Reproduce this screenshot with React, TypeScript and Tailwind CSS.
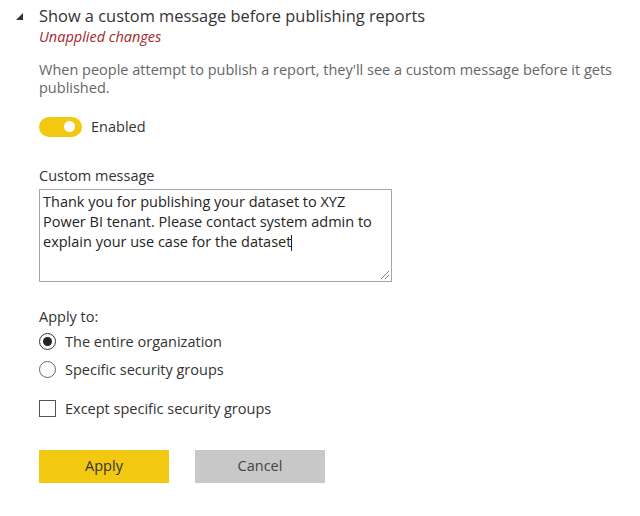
import React from "react";

export default function App() {
  return (
    <div
      className="w-[640px] h-[516px] bg-white overflow-hidden relative"
      style={{ fontFamily: '"Open Sans", "Noto Sans", sans-serif' }}
    >
      <div className="flex items-start pt-[5px]">
        <div className="w-[39px] flex justify-end pr-[16px] pt-[8px]">
          <svg width="7" height="7" viewBox="0 0 7 7">
            <polygon points="7,0 7,7 0,7" fill="#333" />
          </svg>
        </div>
        <div className="flex flex-col">
          <div className="text-[16.4px] leading-[22px] text-[#333333]">
            Show a custom message before publishing reports
          </div>
          <div className="text-[14.5px] leading-[20px] italic text-[#a4262c]">
            Unapplied changes
          </div>
        </div>
      </div>
      <div className="pl-[39px] pr-[20px]">
        <p className="mt-[14px] text-[14.5px] leading-[18px] text-[#666666]">
          When people attempt to publish a report, they'll see a custom message before it gets
          published.
        </p>
        <div className="mt-[19px] flex items-center gap-[9px]">
          <div className="w-[43px] h-[20px] rounded-full bg-[#f2c811] flex items-center justify-end pr-[7px]">
            <div className="w-[11px] h-[11px] rounded-full bg-white" />
          </div>
          <span className="text-[14.5px] text-[#333333]">Enabled</span>
        </div>
        <div className="mt-[28px] text-[14.5px] leading-[20px] text-[#333333]">Custom message</div>
        <div className="mt-[3px] w-[353px] h-[93px] border border-[#a6a6a6] relative pl-[3px] pr-[12px] pt-[2px]">
          <div className="text-[14.5px] leading-[20px] text-[#252423]">
            Thank you for publishing your dataset to XYZ Power BI tenant. Please contact system
            admin to explain your use case for the dataset<span className="inline-block w-[1px] h-[16px] bg-[#252423] align-middle" />
          </div>
          <svg className="absolute right-[2px] bottom-[2px]" width="9" height="9" viewBox="0 0 9 9">
            <line x1="1" y1="9" x2="9" y2="1" stroke="#888" strokeWidth="1" />
            <line x1="5" y1="9" x2="9" y2="5" stroke="#888" strokeWidth="1" />
          </svg>
        </div>
        <div className="mt-[25px] text-[14.5px] leading-[20px] text-[#333333]">Apply to:</div>
        <div className="mt-[4px] flex items-center gap-[9px] h-[22px]">
          <div className="w-[17px] h-[17px] rounded-full border border-[#333333] flex items-center justify-center">
            <div className="w-[9px] h-[9px] rounded-full bg-[#252423]" />
          </div>
          <span className="text-[14.5px] text-[#333333]">The entire organization</span>
        </div>
        <div className="mt-[6px] flex items-center gap-[9px] h-[22px]">
          <div className="w-[17px] h-[17px] rounded-full border border-[#666666]" />
          <span className="text-[14.5px] text-[#333333]">Specific security groups</span>
        </div>
        <div className="mt-[17px] flex items-center gap-[9px] h-[22px]">
          <div className="w-[17px] h-[17px] border border-[#555555]" />
          <span className="text-[14.5px] text-[#333333]">Except specific security groups</span>
        </div>
        <div className="mt-[30px] flex gap-[26px]">
          <button className="w-[130px] h-[33px] bg-[#f2c811] text-[14.5px] text-[#333333]">Apply</button>
          <button className="w-[130px] h-[33px] bg-[#c8c8c8] text-[14.5px] text-[#444444]">Cancel</button>
        </div>
      </div>
    </div>
  );
}
